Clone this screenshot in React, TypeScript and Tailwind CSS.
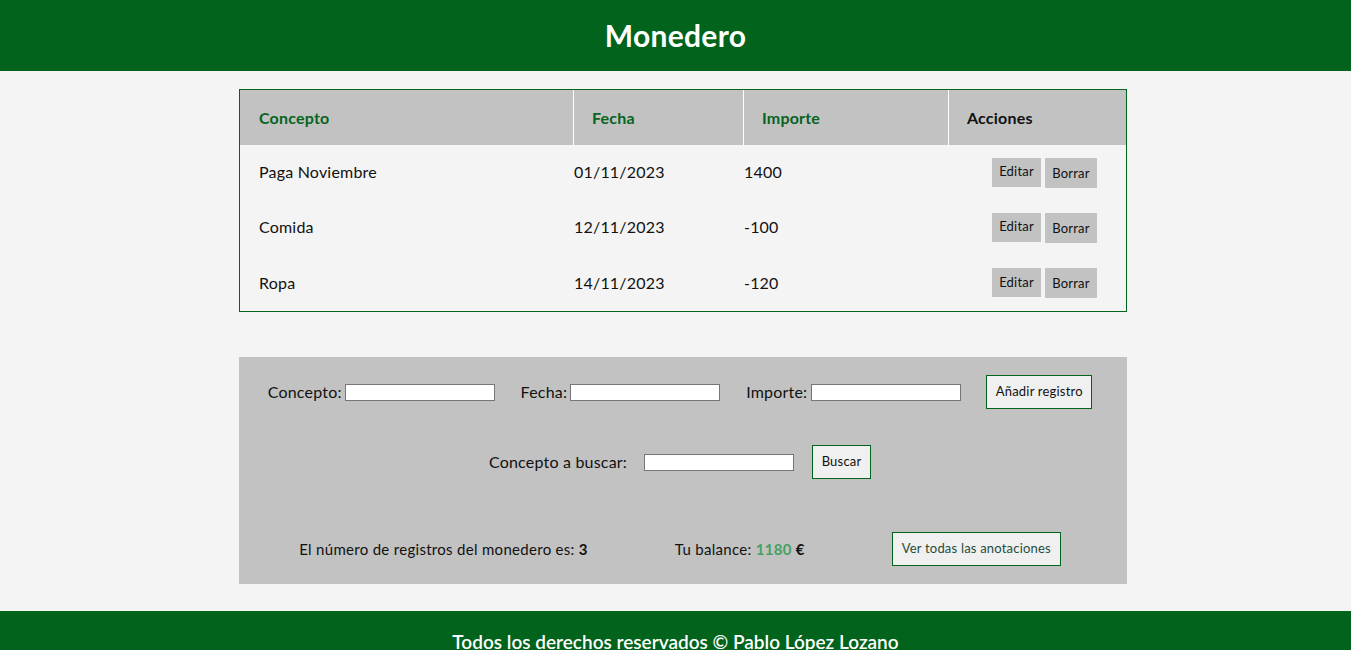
const rows = [
  { concepto: "Paga Noviembre", fecha: "01/11/2023", importe: "1400" },
  { concepto: "Comida", fecha: "12/11/2023", importe: "-100" },
  { concepto: "Ropa", fecha: "14/11/2023", importe: "-120" },
];

export default function App() {
  return (
    <div className="min-h-[650px] bg-[#f4f4f4] text-[#111] font-['Lato',sans-serif]">
      {/* Header */}
      <header className="flex h-[71px] items-center justify-center bg-[#01631c]">
        <h1 className="text-[30px] font-bold tracking-[0.3px] text-white">Monedero</h1>
      </header>

      <main className="ml-[239px] w-[888px] pt-[18px]">
        {/* Tabla */}
        <table className="w-full table-fixed border-separate border-spacing-0 border border-[#01631c] text-[16px] tracking-[0.2px]">
          <thead>
            <tr className="h-[55px] bg-[#c2c2c2] text-left font-bold">
              <th className="w-[334px] border-r border-white pl-[19px] text-[#07641f]">Concepto</th>
              <th className="w-[170px] border-r border-white pl-[18px] text-[#07641f]">Fecha</th>
              <th className="w-[205px] border-r border-white pl-[18px] text-[#07641f]">Importe</th>
              <th className="pl-[18px]">Acciones</th>
            </tr>
          </thead>
          <tbody>
            {rows.map((r, i) => (
              <tr key={r.concepto} className={i === rows.length - 1 ? "h-[56px]" : "h-[55px]"}>
                <td className="pl-[19px] pb-[1px]">{r.concepto}</td>
                <td className="pb-[1px]">{r.fecha}</td>
                <td className="pb-[1px]">{r.importe}</td>
                <td className="pl-[43px]">
                  <div className="flex items-start gap-[4px] text-[13px]">
                    <button className="h-[29px] w-[49px] bg-[#c2c2c2]">Editar</button>
                    <button className="h-[30px] w-[52px] bg-[#c2c2c2] pt-[2px]">Borrar</button>
                  </div>
                </td>
              </tr>
            ))}
          </tbody>
        </table>

        {/* Formulario */}
        <section className="mt-[45px] flex flex-col bg-[#c2c2c2] py-[18px] text-[16px] tracking-[0.2px]">
          <div className="flex items-center justify-center pr-[6px]">
            <label className="flex items-center gap-[3px]">
              Concepto:
              <input className="h-[17px] w-[150px] border border-[#767676] bg-white" />
            </label>
            <label className="ml-[26px] flex items-center gap-[3px]">
              Fecha:
              <input className="h-[17px] w-[150px] border border-[#767676] bg-white" />
            </label>
            <label className="ml-[26px] flex items-center gap-[4px]">
              Importe:
              <input className="h-[17px] w-[150px] border border-[#767676] bg-white" />
            </label>
            <button className="ml-[25px] h-[34px] w-[106px] border border-[#01631c] bg-[#f0f0f0] text-[13px]">
              Añadir registro
            </button>
          </div>

          <div className="mt-[36px] flex items-center justify-center pr-[6px]">
            <span>Concepto a buscar:</span>
            <input className="ml-[17px] h-[17px] w-[150px] border border-[#767676] bg-white" />
            <button className="ml-[18px] h-[34px] w-[59px] border border-[#01631c] bg-[#f0f0f0] text-[13px]">
              Buscar
            </button>
          </div>

          <div className="mt-[53px] flex items-center justify-center gap-[87px] pr-[6px] text-[15px] tracking-[0.3px]">
            <span>
              El número de registros del monedero es: <b>3</b>
            </span>
            <span>
              Tu balance: <b className="text-[#45a062]">1180</b> <b>€</b>
            </span>
            <button className="h-[34px] w-[169px] border border-[#01631c] bg-[#f0f0f0] text-[13px] tracking-[0.2px] text-[#1e4d3b]">
              Ver todas las anotaciones
            </button>
          </div>
        </section>
      </main>

      {/* Footer */}
      <footer className="mt-[27px] flex h-[60px] justify-center bg-[#01631c] pt-[17px] text-[19px] font-semibold text-white">
        Todos los derechos reservados © Pablo López Lozano
      </footer>
    </div>
  );
}
